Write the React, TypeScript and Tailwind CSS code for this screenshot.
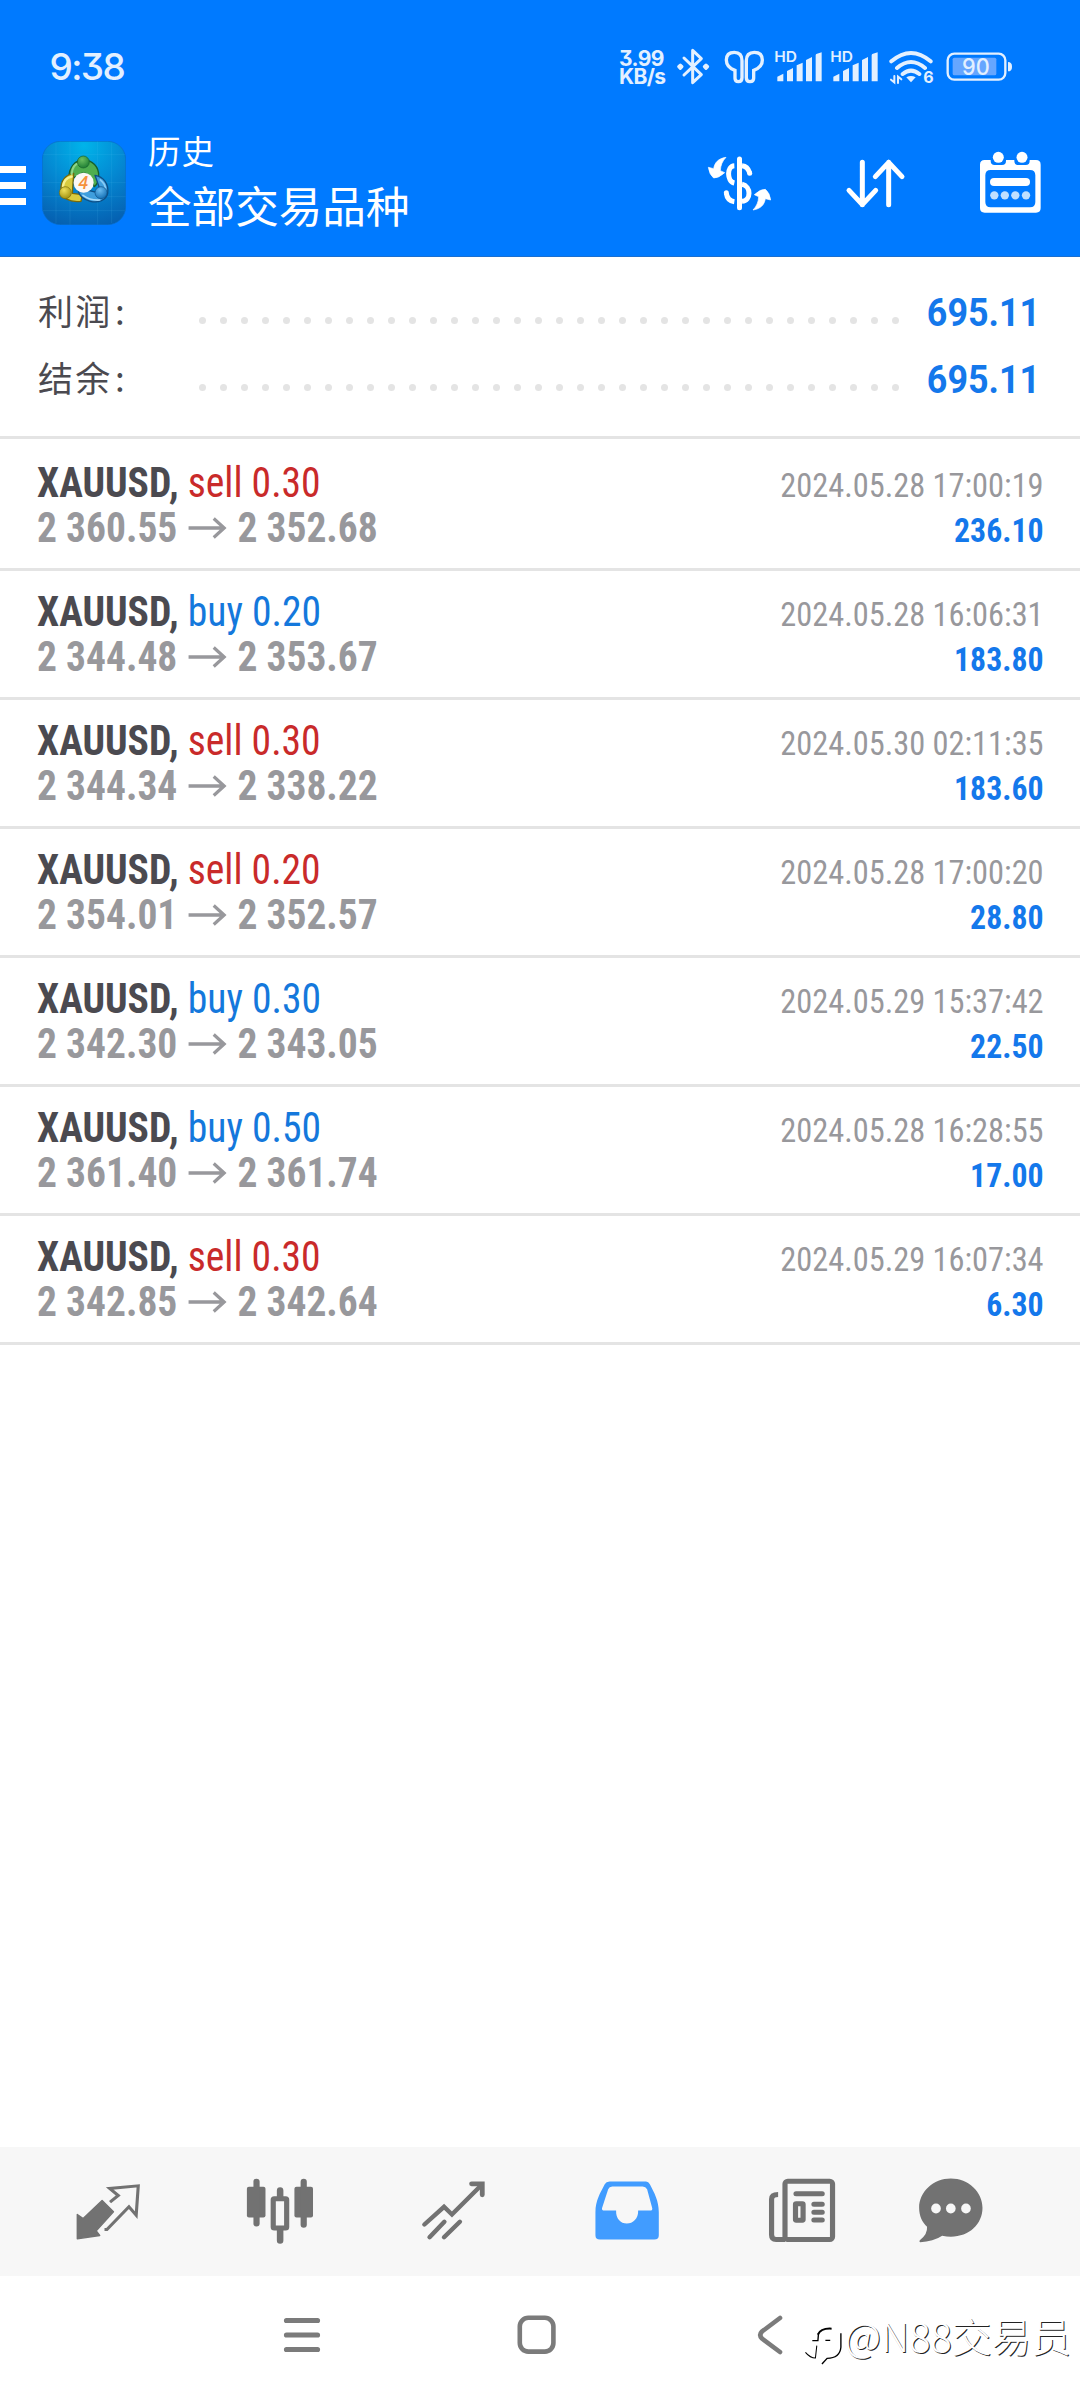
import React from "react";

type Side = "buy" | "sell";
type Deal = { side: Side; volume: string; from: string; to: string; time: string; profit: string };

const deals: Deal[] = [
  { side: "sell", volume: "0.30", from: "2 360.55", to: "2 352.68", time: "2024.05.28 17:00:19", profit: "236.10" },
  { side: "buy", volume: "0.20", from: "2 344.48", to: "2 353.67", time: "2024.05.28 16:06:31", profit: "183.80" },
  { side: "sell", volume: "0.30", from: "2 344.34", to: "2 338.22", time: "2024.05.30 02:11:35", profit: "183.60" },
  { side: "sell", volume: "0.20", from: "2 354.01", to: "2 352.57", time: "2024.05.28 17:00:20", profit: "28.80" },
  { side: "buy", volume: "0.30", from: "2 342.30", to: "2 343.05", time: "2024.05.29 15:37:42", profit: "22.50" },
  { side: "buy", volume: "0.50", from: "2 361.40", to: "2 361.74", time: "2024.05.28 16:28:55", profit: "17.00" },
  { side: "sell", volume: "0.30", from: "2 342.85", to: "2 342.64", time: "2024.05.29 16:07:34", profit: "6.30" },
];

function Signal() {
  return (
    <svg className="h-[45px] w-[56px]" viewBox="515 45 168 135" fill="#e3f0ff">
      <text x="522" y="97" fontSize="43" fontWeight="600" fontFamily="Inter, sans-serif" textLength="68" lengthAdjust="spacingAndGlyphs">HD</text>
      <path d="M531 140L549 131V154H531ZM560 123L578 114V154H560ZM589 106L607 98V154H589ZM617 90L635 81V154H617ZM646 76Q646 72 650 71L664 67V154H646Z" />
    </svg>
  );
}

function StatusBar() {
  return (
    <div className="flex h-[115px] items-start justify-between pt-[45px] pl-[49.5px] pr-[60px] text-[#e3f0ff]">
      <div className="font-[Inter,sans-serif] text-[37px] leading-[43px] font-medium tracking-[-1.6px] [font-feature-settings:'cv09']">9:38</div>
      <div className="flex items-start">
        <div className="mt-[5px] w-[56px] font-[Inter,sans-serif] text-[21px] leading-[18px] font-bold tracking-[-0.6px] [font-feature-settings:'cv09']">
          <div>3.99</div>
          <div>KB/s</div>
        </div>
        <svg className="h-[45px] w-[41.67px]" viewBox="225 45 125 135" fill="none" stroke="#e3f0ff" strokeWidth="9" strokeLinecap="round" strokeLinejoin="round">
          <path d="M252 84L304 134L278 158V61L304 86L252 135" />
          <path d="M241 105L246 110L241 115L236 110ZM318 105L323 110L318 115L313 110Z" />
        </svg>
        <svg className="h-[45px] w-[55px]" viewBox="350 45 165 135" fill="none" stroke="#e3f0ff" strokeWidth="10">
          <path d="M425 92V143Q425 155 414 155Q404 155 404 145V121Q378 112 378 90Q378 67 402 67Q425 67 425 92Z" />
          <path d="M438 92V143Q438 155 449 155Q460 155 460 145V121Q486 112 486 90Q486 67 462 67Q438 67 438 92Z" />
        </svg>
        <Signal />
        <Signal />
        <svg className="h-[45px] w-[56.33px]" viewBox="851 45 169 135" fill="none" stroke="#e3f0ff" strokeWidth="12" strokeLinecap="round">
          <path d="M873 94Q932 44 991 94M890 114Q932 78 974 114M907 132Q932 112 957 132" />
          <path d="M918 142Q932 134 946 142L932 157Z" fill="#e3f0ff" stroke="none" />
          <path d="M882 138V157L872 149M893 159V140L903 148" strokeWidth="6" />
          <text x="969" y="160" fontSize="48" fontWeight="700" fontFamily="Inter, sans-serif" fill="#e3f0ff" stroke="none">6</text>
        </svg>
        <svg className="h-[45px] w-[80px]" viewBox="1020 45 240 135" fill="#e3f0ff">
          <rect x="1043" y="71" width="173" height="78" rx="20" fill="none" stroke="#e3f0ff" strokeWidth="7" />
          <rect x="1058" y="83" width="131" height="53" rx="5" fill="#66a6ff" />
          <path d="M1224 96Q1236 96 1236 110Q1236 124 1224 124Z" />
          <text x="1086" y="135" fontSize="68" fontWeight="500" fontFamily="Inter, sans-serif" textLength="83" lengthAdjust="spacingAndGlyphs">90</text>
        </svg>
      </div>
    </div>
  );
}

function AppLogo() {
  return (
    <svg className="h-[84px] w-[84px]" viewBox="37 35 252 252">
      <defs>
        <radialGradient id="bg" cx="0.5" cy="0.05" r="1">
          <stop offset="0" stopColor="#00b4ea" />
          <stop offset="0.5" stopColor="#0488d2" />
          <stop offset="1" stopColor="#055fb0" />
        </radialGradient>
        <radialGradient id="green" cx="0.4" cy="0.3" r="0.7"><stop offset="0" stopColor="#6cbf60" /><stop offset="1" stopColor="#1f7f35" /></radialGradient>
        <radialGradient id="yellow" cx="0.4" cy="0.3" r="0.7"><stop offset="0" stopColor="#efe05a" /><stop offset="1" stopColor="#a39312" /></radialGradient>
        <radialGradient id="blue" cx="0.4" cy="0.3" r="0.7"><stop offset="0" stopColor="#6bbcf0" /><stop offset="1" stopColor="#1773b8" /></radialGradient>
      </defs>
      <rect x="38" y="36" width="250" height="250" rx="54" fill="url(#bg)" stroke="#0a6cc4" strokeWidth="2" />
      <path d="M79 40V282M121 36V286M204 36V286M246 40V282M40 76H286M38 160H288M38 202H288M40 244H286" stroke="#5fc4f0" strokeOpacity="0.2" strokeWidth="2" />
      <g strokeWidth="4" strokeLinejoin="round">
        <path d="M118 148C116 112 138 92 162 92C188 92 208 112 207 140C207 154 202 166 194 172L178 140C170 128 152 128 142 142Z" fill="#4fae50" stroke="#17602c" />
        <path d="M132 132C108 136 92 154 94 182C96 206 118 220 154 216L158 196L128 192Z" fill="#d8cb3e" stroke="#77690a" />
        <path d="M196 138C222 142 238 164 234 192C230 212 206 222 182 216C166 212 152 202 146 188L172 182L204 190L208 172Z" fill="#3f9edd" stroke="#0e4f86" />
      </g>
      <g fill="none" strokeLinecap="round">
        <path d="M126 134Q128 106 148 101" stroke="#8fd488" strokeWidth="6" />
        <path d="M100 170Q104 146 126 142" stroke="#f6f090" strokeWidth="7" />
        <path d="M160 198Q182 214 210 212" stroke="#a6dafa" strokeWidth="5" />
        <path d="M212 152Q228 164 227 180" stroke="#8accf5" strokeWidth="5" />
      </g>
      <circle cx="161" cy="98" r="18" fill="url(#green)" stroke="#17602c" strokeWidth="2" />
      <circle cx="107" cy="190" r="18" fill="url(#yellow)" stroke="#77690a" strokeWidth="2" />
      <circle cx="214" cy="190" r="18" fill="url(#blue)" stroke="#0e4f86" strokeWidth="2" />
      <circle cx="162" cy="160" r="30" fill="#fbf8f6" />
      <text x="161" y="179" textAnchor="middle" fontSize="52" fontStyle="italic" fontWeight="600" fontFamily="Open Sans, sans-serif" fill="#f5913c">4</text>
    </svg>
  );
}

function Header() {
  return (
    <header className="h-[257px] bg-[#007aff]">
      <StatusBar />
      <div className="flex h-[141px] items-start">
        <div className="mt-[51px] flex w-[26px] flex-col gap-[9px]">
          <div className="h-[7px] bg-white" />
          <div className="h-[7px] bg-white" />
          <div className="h-[7px] bg-white" />
        </div>
        <div className="mt-[26px] ml-[16px]"><AppLogo /></div>
        <div className="mt-[11px] ml-[22px] font-['Noto_Sans_CJK_SC',sans-serif] text-white">
          <div className="text-[32.5px] leading-[48px] tracking-[1px]">历史</div>
          <div className="-mt-[1px] text-[43.6px] leading-[62px]">全部交易品种</div>
        </div>
        <div className="mt-[29px] mr-[30px] ml-auto flex gap-[55px]">
          <svg className="h-[80px] w-[80px]" viewBox="60 42 240 240" fill="none" stroke="white" strokeWidth="15">
            <path d="M178.500 87V233" strokeLinecap="round" />
            <path d="M163 107C140 108 140 154 163 159M186 163C214 168 214 212 186 214" />
            <path d="M186 107Q203 109 209 128M139 190Q142 212 163 215" />
            <circle cx="209" cy="130" r="7.500" fill="white" stroke="none" />
            <circle cx="139" cy="188" r="7.500" fill="white" stroke="none" />
            <g fill="white" stroke="white" strokeWidth="2" strokeLinejoin="round">
              <path d="M138 82C114 86 104 98 101 116L85 112Q88 134 101 144Q115 145 134 128L121 122Q122 98 138 82Z" />
              <path d="M138 82C114 86 104 98 101 116L85 112Q88 134 101 144Q115 145 134 128L121 122Q122 98 138 82Z" transform="rotate(180 178.500 161)" />
            </g>
          </svg>
          <svg className="h-[80px] w-[80px]" viewBox="465 42 240 240" fill="none" stroke="white" strokeWidth="15" strokeLinecap="round" strokeLinejoin="round">
            <path d="M547 97V224M507 181L547 224L587 181M626 224V97M586 140L626 97L666 140" />
          </svg>
          <svg className="h-[80px] w-[80px]" viewBox="870 42 240 240" fill="white">
            <path fillRule="evenodd" d="M914 90H1068Q1082 90 1082 104V234Q1082 248 1068 248H914Q900 248 900 234V104Q900 90 914 90ZM932 120Q916 120 916 136V216Q916 232 932 232H1050Q1066 232 1066 216V136Q1066 120 1050 120Z" />
            <path d="M932 80H978V92Q978 105 966 105H944Q932 105 932 92ZM1003 80H1049V92Q1049 105 1037 105H1015Q1003 105 1003 92Z" fill="#007aff" />
            <circle cx="955" cy="82" r="16.500" />
            <circle cx="1026" cy="82" r="16.500" />
            <rect x="930" y="144" width="120" height="24" rx="12" />
            <g fill="#bfdfff">
              <circle cx="943" cy="196" r="12.500" /><circle cx="974.500" cy="196" r="12.500" /><circle cx="1006" cy="196" r="12.500" /><circle cx="1038" cy="196" r="12.500" />
            </g>
          </svg>
        </div>
      </div>
      <div className="h-[1px] bg-[#1a6fd0]" />
    </header>
  );
}

function SummaryLine({ label, value }: { label: string; value: string }) {
  return (
    <div className="flex h-[67px] items-center">
      <div className="-mt-[3px] w-[161px] font-['Noto_Sans_CJK_SC',sans-serif] text-[35px] leading-[40px] tracking-[2.2px] text-[#4b4a50]">{label}<span className="ml-[2.5px]">:</span></div>
      <div className="mt-[17px] flex gap-[14px]">
        {Array.from({ length: 34 }, (_, i) => (
          <div key={i} className="h-[7px] w-[7px] rounded-full bg-[#e4e4e4]" />
        ))}
      </div>
      <div className="mt-[3px] ml-auto origin-right scale-x-[0.943] font-[Roboto,sans-serif] text-[38px] leading-[40px] font-bold text-[#1478eb]">{value}</div>
    </div>
  );
}

function DealRow({ deal }: { deal: Deal }) {
  return (
    <div className="flex h-[129px] justify-between border-b-[3px] border-[#e4e4e4] pr-[36px] pl-[37px] font-['Roboto_Condensed',Roboto,sans-serif] [font-stretch:75%]">
      <div className="pt-[18px] text-[42px] leading-[45px] font-bold whitespace-nowrap text-[#98989c]">
        <div className="origin-left scale-x-[0.942] text-[#4b4a50]">
          XAUUSD,{" "}
          <span className={deal.side === "sell" ? "font-normal text-[#c92a2a]" : "font-normal text-[#1478dc]"}>
            {deal.side} {deal.volume}
          </span>
        </div>
        <div className="flex origin-left scale-x-[0.94] items-center">
          <span>{deal.from}</span>
          <svg className="mx-[11.5px] h-[22px] w-[41px]" viewBox="0 0 41 22" fill="none" stroke="#98989c" strokeWidth="3.500">
            <path d="M0 11H38M27 1.500L38 11L27 20.500" />
          </svg>
          <span>{deal.to}</span>
        </div>
      </div>
      <div className="pt-[21px] text-right text-[34px] leading-[45px] whitespace-nowrap">
        <div className="origin-right scale-x-[0.952] text-[#98989c]">{deal.time}</div>
        <div className="origin-right scale-x-[0.935] font-bold text-[#1478eb]">{deal.profit}</div>
      </div>
    </div>
  );
}

const tabIcon = "h-[80px] w-[80px]";

function TabBar() {
  return (
    <nav className="flex h-[129px] items-center bg-[#f7f7f7] pl-[20.75px]">
      <div className="flex w-[173.5px] justify-center">
        <svg className={tabIcon} viewBox="196 124.5 232.3 240" preserveAspectRatio="none" fill="#727272">
          <path d="M223 325L288 315L278 301L328 244L295 210L240 264L223 252Z" stroke="#727272" strokeWidth="4" strokeLinejoin="round" />
          <path d="M318 215L342 195L317 174L400 166L394 254L373 229L309 297H302" fill="none" stroke="#727272" strokeWidth="9" />
        </svg>
      </div>
      <div className="flex w-[173.5px] justify-center">
        <svg className={tabIcon} viewBox="699.9 124.5 232.3 240" preserveAspectRatio="none" fill="#727272">
          <rect x="717" y="169" width="54" height="92" rx="6" />
          <rect x="736" y="145" width="18" height="143" rx="9" />
          <rect x="855" y="169" width="54" height="92" rx="6" />
          <rect x="873" y="145" width="18" height="147" rx="9" />
          <rect x="793.500" y="204.500" width="39" height="88" rx="3" fill="none" stroke="#727272" strokeWidth="15" />
          <path d="M804 200V180Q804 170 813.500 170Q823 170 823 180V200ZM804 298V330Q804 340 813.500 340Q823 340 823 330V298Z" />
        </svg>
      </div>
      <div className="flex w-[173.5px] justify-center">
        <svg className={tabIcon} viewBox="1203.7 124.5 232.3 240" preserveAspectRatio="none" fill="none" stroke="#727272" strokeWidth="13" strokeLinecap="round">
          <path d="M1231 282L1288 229L1311 252L1396 164M1246 320L1289 274M1288 320L1334 274" />
          <path d="M1368 160H1399V193" strokeWidth="14" />
        </svg>
      </div>
      <div className="flex w-[173.5px] justify-center">
        <svg className={tabIcon} viewBox="139.4 124.5 232.3 240" preserveAspectRatio="none" fill="#419cff">
          <path fillRule="evenodd" d="M202 153H308Q315 153 319 161C332 187 345 210 345 245V314Q345 327 332 327H174Q161 327 161 314V245C161 210 175 187 188 161Q192 153 202 153ZM210 168Q201 168 198 176L180 233Q179 240 187 240H221C220 265 234 279 252 279C270 279 286 265 285 240H320Q327 240 326 233L311 176Q307 168 298 168Z" />
        </svg>
      </div>
      <div className="flex w-[173.5px] justify-center">
        <svg className={tabIcon} viewBox="643.2 124.5 232.3 240" preserveAspectRatio="none" fill="none" stroke="#727272" strokeWidth="15">
          <rect x="710" y="152" width="138" height="175" rx="8" />
          <path d="M690 192Q671 192 671 206V313Q671 327 684 327H710" />
          <g strokeLinecap="round"><path d="M742 190H818M794 221H818M794 245H818M794 268.500H818" /></g>
          <rect x="740.500" y="220" width="22" height="49" rx="2" />
        </svg>
      </div>
      <div className="flex w-[125px] justify-center">
        <svg className={tabIcon} viewBox="1077.4 124.5 232.3 240" preserveAspectRatio="none" fill="#727272">
          <path d="M1193 144C1244 144 1285 184 1285 232C1285 288 1234 330 1168 316Q1142 334 1104 335Q1100 334 1103 329Q1126 312 1124 289C1110 276 1101 256 1101 232C1101 184 1142 144 1193 144Z" />
          <g fill="#f7f7f7"><ellipse cx="1150" cy="234" rx="14" ry="15" /><ellipse cx="1193" cy="234" rx="14" ry="15" /><ellipse cx="1237" cy="234" rx="14" ry="15" /></g>
        </svg>
      </div>
    </nav>
  );
}

function SystemNav() {
  return (
    <div className="flex h-[124px] items-start gap-[194px] bg-white pt-[39px] pl-[282px]">
      <svg className="h-[40px] w-[40px]" viewBox="0 0 40 40" stroke="#7b7b7b" strokeWidth="5.200" strokeLinecap="round">
        <path d="M4.500 5.500H35.500M4.500 20H35.500M4.500 34.500H35.500" />
      </svg>
      <svg className="h-[40px] w-[40px]" viewBox="0 0 40 40" fill="none" stroke="#7b7b7b" strokeWidth="4.600">
        <rect x="3.800" y="2.800" width="33.600" height="33.800" rx="8.500" />
      </svg>
      <svg className="h-[40px] w-[40px]" viewBox="0 0 40 40" fill="none" stroke="#7b7b7b" strokeWidth="4.600" strokeLinecap="round">
        <path d="M30 3L12 16.500Q8.500 20 12 23.500L30 37" />
      </svg>
    </div>
  );
}

function Watermark() {
  return (
    <div className="absolute top-[2310px] left-[801.5px] flex items-start">
      <svg className="mt-[14px] h-[43.3px] w-[41.3px]" viewBox="760 580 120 130" preserveAspectRatio="none" fill="none" stroke="black" strokeWidth="4">
        <path d="M806 612Q815 592 846 594" strokeWidth="6" />
        <path d="M790 630H808M828 629H842M808 608L806 632" />
        <path d="M803 645L799 682Q784 682 770 665" strokeWidth="3" />
        <path d="M873 608V650Q870 683 833 683L818 700" />
      </svg>
      <div className="ml-[2px] font-['Noto_Sans_CJK_SC',sans-serif] text-[39.8px] leading-[50px] font-light whitespace-nowrap text-white [text-shadow:1px_1px_0.5px_#222]">@N88交易员</div>
    </div>
  );
}

export default function App() {
  return (
    <div className="relative flex h-[2400px] w-[1080px] flex-col overflow-hidden bg-white">
      <Header />
      <section className="h-[182px] border-b-[3px] border-[#e4e4e4] pt-[21px] pr-[40px] pl-[38px]">
        <SummaryLine label="利润" value="695.11" />
        <SummaryLine label="结余" value="695.11" />
      </section>
      <main className="flex-1 pt-[3px]">
        {deals.map((deal) => (
          <DealRow key={deal.time} deal={deal} />
        ))}
      </main>
      <TabBar />
      <SystemNav />
      <Watermark />
    </div>
  );
}
